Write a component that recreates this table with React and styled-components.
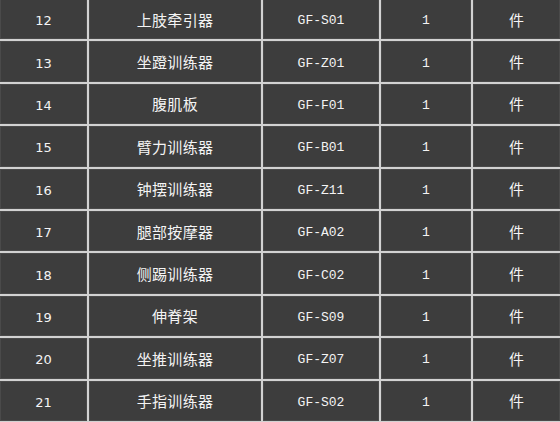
import React from 'react';
import styled, { createGlobalStyle } from 'styled-components';

const GlobalStyle = createGlobalStyle`
  html, body {
    margin: 0;
    padding: 0;
    background: #d2d2d2;
    overflow: hidden;
  }
`;

const Table = styled.div`
  display: grid;
  grid-template-columns: 87px 172px 116px 90px 1fr;
  grid-auto-rows: 40.4px;
  gap: 2px;
  width: 560px;
  margin-top: -1px;
  background: #d2d2d2;
`;

const Cell = styled.div`
  display: flex;
  align-items: center;
  justify-content: center;
  background: #3d3d3d;
  color: #f4f4f4;
  box-shadow: inset 0 0 0 1px #4a4a4a;
  font-family: ${(p) =>
    p.$kind === 'code'
      ? '"Liberation Mono", "Noto Sans CJK SC", monospace'
      : p.$kind === 'num'
      ? '"DejaVu Sans", "Noto Sans CJK SC", sans-serif'
      : '"Noto Sans CJK SC", sans-serif'};
  font-size: ${(p) => (p.$kind === 'name' || p.$kind === 'unit' ? '15px' : '13px')};
  padding-top: ${(p) => (p.$kind === 'code' || p.$kind === 'num' ? '3px' : '0')};
  letter-spacing: ${(p) => (p.$kind === 'name' ? '0.3px' : '0')};
`;

const rows = [
  ['12', '上肢牵引器', 'GF-S01'],
  ['13', '坐蹬训练器', 'GF-Z01'],
  ['14', '腹肌板', 'GF-F01'],
  ['15', '臂力训练器', 'GF-B01'],
  ['16', '钟摆训练器', 'GF-Z11'],
  ['17', '腿部按摩器', 'GF-A02'],
  ['18', '侧踢训练器', 'GF-C02'],
  ['19', '伸脊架', 'GF-S09'],
  ['20', '坐推训练器', 'GF-Z07'],
  ['21', '手指训练器', 'GF-S02'],
];

export default function App() {
  return (
    <>
      <GlobalStyle />
      <Table>
        {rows.map(([no, name, code]) => (
          <React.Fragment key={no}>
            <Cell $kind="num">{no}</Cell>
            <Cell $kind="name">{name}</Cell>
            <Cell $kind="code">{code}</Cell>
            <Cell $kind="code">1</Cell>
            <Cell $kind="unit">件</Cell>
          </React.Fragment>
        ))}
      </Table>
    </>
  );
}
